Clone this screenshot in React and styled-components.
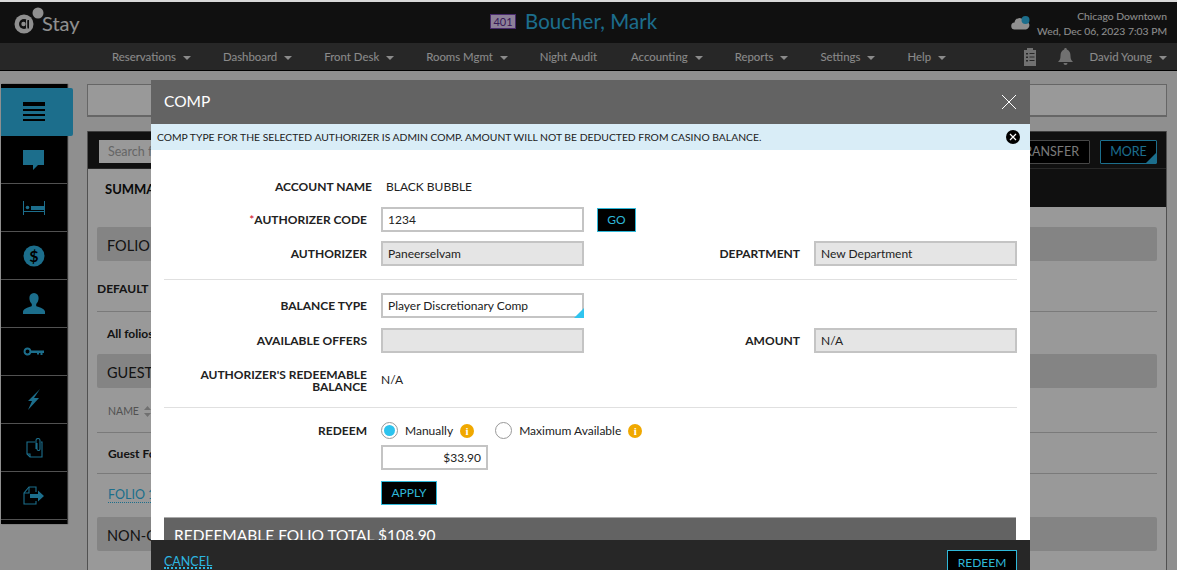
import React from "react";
import styled, { createGlobalStyle } from "styled-components";

const Global = createGlobalStyle`
  html, body { margin: 0; padding: 0; background: #d8d8d8; }
  * { box-sizing: border-box; }
  body { font-family: Lato, "Open Sans", sans-serif; }
`;

const Page = styled.div`
  position: relative; width: 1177px; height: 570px; overflow: hidden; padding-top: 2px; background: #d8d8d8;
`;
const Header = styled.header`
  height: 41px; background: #1c1c1c; display: flex; align-items: center; padding-right: 10px;
`;
const Logo = styled.div`
  width: 490px; padding-left: 14px; display: flex; align-items: center; color: #f0f0f0; font-size: 20px;
`;
const LogoMark = styled.svg`
  width: 30px; height: 28px; margin: -3px -2px 0 0; flex: none;
`;
const Room = styled.span`
  width: 26px; height: 15px; margin-right: 9px; background: #ecd5ff; border: 1px solid #7a46b4; color: #5a2a90;
  font-size: 11px; line-height: 13px; text-align: center; letter-spacing: 0;
`;
const Guest = styled.div`
  display: flex; align-items: center; color: #2fb8e9; font-size: 20.4px; letter-spacing: 0.1px; margin-top: -3px;
`;
const Status = styled.div`
  margin-left: auto; display: flex; align-items: center; gap: 7px; color: #eee; font-size: 10.35px;
`;
const StatusText = styled.div`
  text-align: right; line-height: 15px; padding-top: 2px;
`;
const Nav = styled.nav`
  height: 27px; background: #424242; display: flex; align-items: center; padding: 0 10px 0 112px; gap: 32px;
  color: #e8e8e8; font-size: 11.4px;
`;
const NavItem = styled.span`
  display: flex; align-items: center; gap: 7px; white-space: nowrap;
  padding-right: ${p => p.$plain ? 2 : 0}px;
`;
const UserItem = styled(NavItem)`
  margin-left: 1px;
`;
const Caret = styled.i`
  width: 0; height: 0; border-left: 4px solid transparent; border-right: 4px solid transparent; border-top: 4px solid currentColor;
  margin-top: 2px;
`;
const NavRight = styled.div`
  margin-left: auto; display: flex; align-items: center; gap: 16px; color: #e8e8e8;
`;
const NavIcon = styled.svg`
  color: #bdbdbd; margin-left: ${p => p.$ml || 0}px; flex: none;
`;
const Rule = styled.div`
  height: 1px; background: #000;
`;
const Body = styled.div`
  display: flex; padding-top: 13px; background: #eee; height: 600px;
`;
const Sidebar = styled.aside`
  position: relative; width: 66px; height: 440px; margin-left: 1px; background: #000; padding-top: 4px; border-bottom: 4px solid #000; flex: none;
  box-shadow: 1px 0 1px #555;
`;
const SideItem = styled.div`
  height: 48px; display: flex; align-items: center; justify-content: center; color: #2fb8e9;
  border-bottom: 1px solid #888;
  ${p => p.$active && `
    background: #2fb8e9; color: #000; width: 72px; border-radius: 0 2px 2px 0; border-bottom: 0; position: relative;
    padding-right: 6px;
  `}
`;
const Main = styled.main`
  margin-left: 20px; width: 1080px; display: flex; flex-direction: column; gap: 14px; flex: none;
`;
const TopBar = styled.div`
  height: 33px; background: #fff; border: 1px solid #aaa; border-bottom-width: 2px;
`;
const Panel = styled.section`
  background: #fff; height: 460px; border-left: 1px solid #888; border-right: 1px solid #888;
`;
const PanelTop = styled.div`
  height: 38px; background: #1c1c1c; display: flex; align-items: center; padding: 3px 9px 0 11px; gap: 10px; border-top: 1px solid #666;
  border-bottom: 1px solid #444;
`;
const Search = styled.div`
  width: 300px; height: 23px; background: #fff; color: #aaa; font-size: 12.5px; padding: 4px 9px; margin-right: auto;
`;
const Btn = styled.span`
  height: 24px; padding: 0 10px; border: 1px solid #777; background: #000; color: #ccc; font-size: 12.5px; display: flex; align-items: center; border-radius: 1px;
`;
const MoreBtn = styled(Btn)`
  position: relative; width: 57px; justify-content: center; border-color: #2fb8e9; color: #2fb8e9; overflow: hidden;
  &::after { content: ""; position: absolute; right: 0; bottom: 0; border: 5px solid transparent; border-right-color: #2fb8e9; border-bottom-color: #2fb8e9; }
`;
const Tabs = styled.div`
  height: 38px; background: #1c1c1c; display: flex;
`;
const Tab = styled.div`
  width: 130px; background: #fff; color: #111; font-size: 13px; font-weight: 700; padding: 12px 17px;
`;
const PanelBody = styled.div`
  padding: 20px 9px 0;
`;
const SectionBar = styled.div`
  height: 34px; background: #dcdcdc; color: #222; font-size: 14.5px; padding: 10px 10px 0; line-height: 17px; border-radius: 2px;
`;
const Bold = styled.div`
  color: #222; font-size: 12px; font-weight: 700; padding: ${p => p.$pad || "0"}; border-bottom: ${p => p.$line ? "1px solid #ccc" : "0"};
`;
const ColHead = styled.div`
  color: #888; font-size: 10.5px; padding: 17px 0 15px 11px; border-bottom: 1px solid #ccc; display: flex; align-items: center; gap: 5px;
`;
const FolioLink = styled.div`
  color: #2fb8e9; font-size: 12.5px; margin: 13px 0 14px 11px; width: fit-content; line-height: 15px; border-bottom: 1px dotted #2fb8e9;
`;

const Overlay = styled.div`
  position: absolute; inset: 2px 0 0 0; background: rgba(0,0,0,.4);
`;
const Modal = styled.div`
  position: absolute; left: 151px; top: 80px; width: 879px; height: 490px; background: #fff; display: flex; flex-direction: column; overflow: hidden;
`;
const ModalHead = styled.div`
  height: 44px; flex: none; background: #636363; color: #fff; font-size: 15.5px; display: flex; align-items: center; justify-content: space-between; padding: 0 13px 3px;
`;
const CloseIcon = styled.svg`
  margin-top: 3px; flex: none;
`;
const Alert = styled.div`
  height: 26px; flex: none; background: #d9edf7; color: #222; font-size: 10.33px; display: flex; align-items: center; justify-content: space-between; padding: 0 10px 0 6px;
`;
const ModalBody = styled.div`
  flex: 1; min-height: 0; overflow: hidden; padding: 0 13px;
`;
const Row = styled.div`
  display: flex; align-items: center; height: ${p => p.$h || 25}px; margin-top: ${p => p.$mt || 0}px;
`;
const Label = styled.label`
  width: ${p => p.$w || 203}px; flex: none; text-align: right; font-size: 12px; font-weight: 700; color: #222; margin-right: 14px; line-height: 12px;
  ${p => p.$grow && "flex: 1; width: auto;"}
  ${p => p.$two && "padding-top: 2px;"}
  b { color: #d0021b; font-weight: 400; }
`;
const Value = styled.span`
  font-size: 12px; color: #222; margin-top: ${p => p.$mt || 0}px;
`;
const Input = styled.div`
  position: relative; width: ${p => p.$w || 203}px; height: 25px; flex: none; border: 2px solid #c4c4c4; background: ${p => p.$ro ? "#e5e5e5" : "#fff"};
  padding: 0 5px; font-size: 12px; line-height: 21px; color: #222; text-align: ${p => p.$right ? "right" : "left"};
`;
const SelectMark = styled.i`
  position: absolute; right: -2px; bottom: -2px; border: 5px solid transparent; border-right-color: #2fc4ef; border-bottom-color: #2fc4ef;
`;
const ActionBtn = styled.button`
  height: 24px; padding: 0; width: ${p => p.$w}px; margin-left: ${p => p.$ml || 0}px; background: #000; border: 1px solid #2fb8d9; color: #2fb8d9; font: 12px Lato, sans-serif; flex: none;
`;
const Sep = styled.hr`
  margin: ${p => p.$m}; border: 0; border-top: 1px solid #e0e0e0;
`;
const Radio = styled.span`
  width: 17px; height: 17px; border-radius: 50%; border: 1px solid #999; background: #fff; display: flex; align-items: center; justify-content: center; flex: none;
  ${p => p.$on && `&::after { content: ""; width: 11px; height: 11px; border-radius: 50%; background: #2cc3ee; }`}
`;
const RadioText = styled.span`
  font-size: 12px; color: #222; margin: 0 7px;
`;
const Info = styled.span`
  width: 14px; height: 14px; border-radius: 50%; background: #f0a800; color: #fff; font: 700 11px/14px "Liberation Serif", serif; text-align: center; margin-right: ${p => p.$mr || 0}px; flex: none;
`;
const TotalBar = styled.div`
  margin-top: 12px; height: 40px; margin-right: 1px; background: #636363; border-top: 1px solid #aaa; color: #fff; font-size: 15.5px; padding: 8px 10px;
`;
const Footer = styled.div`
  height: 30px; flex: none; background: #272727; display: flex; justify-content: space-between; padding: 10px 13px 0; position: relative;
`;
const Cancel = styled.span`
  color: #2db6e0; font-size: 12.5px; height: 19px; line-height: 23px; border-bottom: 2px dotted #2db6e0;
`;
const Redeem = styled.span`
  width: 70px; height: 30px; background: #000; border: 1px solid #2fb8d9; color: #2fb8d9; font-size: 12px; text-align: center; line-height: 23px;
`;

const Ic = ({ w = 24, h = 24, children, ...r }) => (
  <svg width={w} height={h} viewBox={`0 0 ${w} ${h}`} fill="currentColor" {...r}>{children}</svg>
);

const sideIcons = [
  <Ic key="m" w={22} h={22}><rect y="1" width="22" height="4" /><rect y="8" width="22" height="2" /><rect y="13" width="22" height="2" /><rect y="18" width="22" height="2" /></Ic>,
  <Ic key="c" w={22} h={22}><path d="M0 1h21v15h-6l-5 5v-5H0z" /></Ic>,
  <Ic key="b" w={22} h={16}><path d="M0 1h1v14H0zM21 1h1v14h-1zM1 11h20v1H1z" /><circle cx="4.500" cy="7.500" r="1.800" /><rect x="8" y="6" width="13" height="4" /></Ic>,
  <svg key="d" width="22" height="22" viewBox="0 0 22 22"><circle cx="11" cy="11" r="10.500" fill="currentColor" /><text x="11" y="16.500" textAnchor="middle" fontFamily="Lato" fontWeight="700" fontSize="16" fill="#000">$</text></svg>,
  <Ic key="u" w={22} h={22}><path d="M11 0c3 0 4.600 2.200 4.600 5 0 2.600-1 4.600-2.400 6v2c1.500 1 8 2 8.800 5.500V21H0v-2.500C.8 15 7.300 14 8.800 13v-2C7.400 9.600 6.400 7.600 6.400 5 6.400 2.200 8 0 11 0z" /></Ic>,
  <Ic key="k" w={22} h={10}><path fillRule="evenodd" d="M4.500 0.500a4 4 0 0 1 3.800 3H21v2.500h-1.500V8h-2V6h-1.500v1.500h-2V6H8.300a4 4 0 1 1-3.800-5.500zm0 2a2 2 0 1 0 0 4 2 2 0 0 0 0-4z" /></Ic>,
  <Ic key="l" w={14} h={22}><path d="M13 0L7 9h5L1 21l4-9H1z" /></Ic>,
  <svg key="f" width="17" height="20" viewBox="0 0 17 20" fill="none" stroke="currentColor" strokeWidth="1.100"><path d="M9 4H1v12l3 3h12V4h-1" /><path d="M1 16h3v3" /><path d="M10 11V2.500a2 2 0 0 1 4 0V11a1.500 1.500 0 0 1-3 0V5" /></svg>,
  <svg key="e" width="22" height="19" viewBox="0 0 22 19" fill="none" stroke="currentColor" strokeWidth="1.100"><path d="M13 6V1H6L1 7v11h12v-3" /><path d="M1 7h5V1" /><path fill="currentColor" stroke="none" d="M7 8h8V4.500l6 5.500-6 5.500V12H7z" /></svg>,
];

const nav = [["Reservations", 1], ["Dashboard", 1], ["Front Desk", 1], ["Rooms Mgmt", 1], ["Night Audit", 0], ["Accounting", 1], ["Reports", 1], ["Settings", 1], ["Help", 1]];

export default function App() {
  return (
    <Page>
      <Global />
      <Header>
        <Logo>
          <LogoMark viewBox="0 0 30 28">
            <circle cx="10" cy="17" r="9.500" fill="#efefef" />
            <circle cx="10" cy="17" r="5" fill="#1c1c1c" />
            <circle cx="9.500" cy="17" r="2.200" fill="#efefef" />
            <path d="M12 12.500l1.500 0v9l-1.500 0z" fill="#efefef" />
            <rect x="13.500" y="13" width="1.500" height="8.500" fill="#1c1c1c" />
            <circle cx="24" cy="6" r="5.500" fill="#efefef" />
          </LogoMark>
          <span>Stay</span>
        </Logo>
        <Guest>
          <Room>401</Room>
          Boucher, Mark
        </Guest>
        <Status>
          <svg width="19" height="14" viewBox="0 0 19 14">
            <path d="M4 13.500a3.500 3.500 0 0 1-.5-7A5 5 0 0 1 13 5a4 4 0 0 1 2 8.500z" fill="#f0f0f0" />
            <circle cx="14.500" cy="4" r="4" fill="#2fb8e9" />
          </svg>
          <StatusText>Chicago Downtown<br />Wed, Dec 06, 2023 7:03 PM</StatusText>
        </Status>
      </Header>
      <Nav>
        {nav.map(([t, c]) => <NavItem key={t} $plain={!c}>{t}{c ? <Caret /> : null}</NavItem>)}
        <NavRight>
          <NavIcon width="14" height="18" viewBox="0 0 14 18">
            <path fillRule="evenodd" fill="currentColor" d="M1 2h3V0h6v2h3v16H1zM3 5v1.500h2V5zM6.500 5v1h5V5zM3 8.500V10h2V8.500zM6.500 8.500v1h5v-1zM3 12v1.500h2V12zM6.500 12v1h5v-1z" />
          </NavIcon>
          <NavIcon width="15" height="18" viewBox="0 0 15 18" $ml={5}>
            <path fill="currentColor" d="M7.500 0c1 0 1.300.7 1.300 1.500C11.500 2.200 12.500 5 12.500 8c0 3 .8 4.500 2.500 6H0c1.700-1.500 2.500-3 2.500-6 0-3 1-5.800 3.700-6.500C6.200.7 6.500 0 7.500 0zM5.500 15h4a2 2 0 0 1-4 0z" />
          </NavIcon>
          <UserItem>David Young<Caret /></UserItem>
        </NavRight>
      </Nav>
      <Rule />
      <Body>
        <Sidebar>
          {sideIcons.map((ic, i) => <SideItem key={i} $active={i === 0}>{ic}</SideItem>)}
        </Sidebar>
        <Main>
          <TopBar />
          <Panel>
            <PanelTop>
              <Search>Search for...</Search>
              <Btn>TRANSFER</Btn>
              <MoreBtn>MORE</MoreBtn>
            </PanelTop>
            <Tabs><Tab>SUMMARY</Tab></Tabs>
            <PanelBody>
              <SectionBar>FOLIO</SectionBar>
              <Bold $pad="20px 0 15px" $line>DEFAULT FOLIO</Bold>
              <Bold $pad="14px 0 13px 10px">All folios</Bold>
              <SectionBar>GUEST FOLIOS</SectionBar>
              <ColHead>NAME
                <svg width="7" height="11" viewBox="0 0 7 11" fill="#bbb"><path d="M3.500 0L7 4H0zM3.500 11L0 7h7z" /></svg>
              </ColHead>
              <Bold $pad="13px 0 12px 11px" $line>Guest Folio</Bold>
              <FolioLink>FOLIO 1</FolioLink>
              <SectionBar>NON-GUEST FOLIOS</SectionBar>
            </PanelBody>
          </Panel>
        </Main>
      </Body>
      <Overlay />
      <Modal>
        <ModalHead>
          COMP
          <CloseIcon width="16" height="16" viewBox="0 0 16 16" stroke="#fff" strokeWidth="1"><path d="M1 1l14 14M15 1L1 15" /></CloseIcon>
        </ModalHead>
        <Alert>
          COMP TYPE FOR THE SELECTED AUTHORIZER IS ADMIN COMP. AMOUNT WILL NOT BE DEDUCTED FROM CASINO BALANCE.
          <svg width="14" height="14" viewBox="0 0 14 14"><circle cx="7" cy="7" r="7" fill="#000" /><path d="M4 4l6 6M10 4l-6 6" stroke="#fff" strokeWidth="1.200" /></svg>
        </Alert>
        <ModalBody>
          <Row $mt={24} $h={25}><Label $w={208}>ACCOUNT NAME</Label><Value>BLACK BUBBLE</Value></Row>
          <Row $mt={8}>
            <Label><b>*</b>AUTHORIZER CODE</Label><Input>1234</Input>
            <ActionBtn $w={39} $ml={13}>GO</ActionBtn>
          </Row>
          <Row $mt={9}>
            <Label>AUTHORIZER</Label><Input $ro>Paneerselvam</Input>
            <Label $grow>DEPARTMENT</Label><Input $ro>New Department</Input>
          </Row>
          <Sep $m="13px 0 13px" />
          <Row>
            <Label>BALANCE TYPE</Label><Input>Player Discretionary Comp<SelectMark /></Input>
          </Row>
          <Row $mt={10}>
            <Label>AVAILABLE OFFERS</Label><Input $ro />
            <Label $grow>AMOUNT</Label><Input $ro>N/A</Input>
          </Row>
          <Row $mt={14} $h={26}>
            <Label $two>AUTHORIZER'S REDEEMABLE BALANCE</Label><Value $mt={-2}>N/A</Value>
          </Row>
          <Sep $m="14px 0 13px" />
          <Row $h={19}>
            <Label>REDEEM</Label>
            <Radio $on /><RadioText>Manually</RadioText><Info $mr={21}>i</Info>
            <Radio /><RadioText>Maximum Available</RadioText><Info>i</Info>
          </Row>
          <Row $mt={5}><Label /><Input $w={107} $right>$33.90</Input></Row>
          <Row $mt={10}><Label /><ActionBtn $w={56}>APPLY</ActionBtn></Row>
          <TotalBar>REDEEMABLE FOLIO TOTAL $108.90</TotalBar>
        </ModalBody>
        <Footer>
          <Cancel>CANCEL</Cancel>
          <Redeem>REDEEM</Redeem>
        </Footer>
      </Modal>
    </Page>
  );
}
